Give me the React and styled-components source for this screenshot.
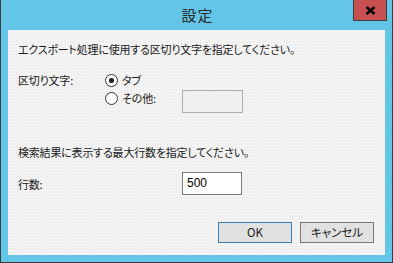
import React, { useState } from 'react';
import styled, { createGlobalStyle } from 'styled-components';

const GlobalStyle = createGlobalStyle`
  html, body {
    margin: 0;
    padding: 0;
    background: #ffffff;
  }
  body {
    font-family: "Noto Sans CJK JP", "Noto Sans", sans-serif;
  }
`;

const Window = styled.div`
  width: 393px;
  height: 263px;
  box-sizing: border-box;
  background: #63c6e8;
  border-left: 1px solid #3b3b3b;
  border-right: 1px solid #3b3b3b;
  border-bottom: 1px solid #3b3b3b;
  display: flex;
  flex-direction: column;
  padding: 0 7px 7px 7px;
`;

const TitleBar = styled.div`
  height: 30px;
  position: relative;
  display: flex;
  align-items: center;
  justify-content: center;
`;

const Title = styled.div`
  font-family: "Noto Sans CJK JP", sans-serif;
  font-size: 15px;
  color: #2b2b2b;
  letter-spacing: 1px;
  margin-top: -1px;
  padding-left: 2px;
`;

const CloseButton = styled.div`
  position: absolute;
  top: 0;
  right: -2px;
  width: 34px;
  height: 21px;
  box-sizing: border-box;
  background: #c75050;
  border: 1px solid #3d3d3d;
  border-top: none;
  display: flex;
  align-items: center;
  justify-content: center;
`;

const Client = styled.div`
  flex: 1;
  box-sizing: border-box;
  background-color: #f0f0f0;
  background-image: radial-gradient(circle, rgba(255, 255, 255, 0.85) 0.6px, transparent 0.9px);
  background-size: 3px 3px;
  padding: 10px 11px 0 10px;
  display: flex;
  flex-direction: column;
  font-size: 11px;
  letter-spacing: -0.2px;
  color: #1a1a1a;
  font-feature-settings: "palt";
`;

const Text = styled.div`
  line-height: 18px;
  height: 18px;
  white-space: nowrap;
  margin-top: ${p => p.$top || 0}px;
`;

const Grid = styled.div`
  display: grid;
  grid-template-columns: 87px 1fr;
  margin-top: ${p => p.$top || 0}px;
`;

const Label = styled.div`
  line-height: 18px;
  height: 18px;
  white-space: nowrap;
`;

const Options = styled.div`
  display: flex;
  flex-direction: column;
`;

const OptionRow = styled.div`
  display: flex;
  align-items: flex-start;
`;

const Option = styled.label`
  display: flex;
  align-items: center;
  height: 18px;
  width: ${p => p.$width || 'auto'};
  gap: 4px;
  cursor: default;
`;

const Radio = styled.span`
  width: 13px;
  height: 13px;
  box-sizing: border-box;
  border-radius: 50%;
  border: 1px solid #333333;
  background: #ffffff;
  display: flex;
  align-items: center;
  justify-content: center;
  &::after {
    content: '';
    width: 5px;
    height: 5px;
    border-radius: 50%;
    background: ${p => (p.$checked ? '#1a1a1a' : 'transparent')};
  }
`;

const Field = styled.div`
  width: ${p => p.$width}px;
  height: ${p => p.$height}px;
  box-sizing: border-box;
  margin-top: ${p => p.$top || 0}px;
  border: 1px solid ${p => (p.$disabled ? '#adadad' : '#7a7a7a')};
  background: ${p => (p.$disabled ? '#f0f0f0' : '#ffffff')};
  font-family: "Liberation Sans", Arial, sans-serif;
  font-size: 12px;
  letter-spacing: 0;
  line-height: ${p => p.$height - 2}px;
  padding-left: 4px;
  color: #000;
`;

const CountRow = styled.div`
  display: flex;
  align-items: center;
  margin-top: ${p => p.$top || 0}px;
`;

const CountLabel = styled.div`
  width: 164px;
  line-height: 18px;
  padding-top: 1px;
`;

const ButtonRow = styled.div`
  display: flex;
  justify-content: flex-end;
  gap: 8px;
  margin-top: 27px;
`;

const Button = styled.button`
  width: 74px;
  height: 21px;
  box-sizing: border-box;
  background: #e1e1e1;
  border: 1px solid ${p => (p.$primary ? '#3c7fb1' : '#7a7a7a')};
  font-family: "Noto Sans CJK JP", sans-serif;
  font-feature-settings: "palt";
  font-size: 11.5px;
  color: #1a1a1a;
  padding: 0;
  line-height: 19px;
`;

const CloseIcon = () => (
  <svg width="11" height="9" viewBox="0 0 11 9">
    <path d="M1.5 1 L9.5 8 M9.5 1 L1.5 8" stroke="#000" strokeWidth="2.4" />
  </svg>
);

const App = () => {
  const [delimiter, setDelimiter] = useState('tab');

  return (
    <>
      <GlobalStyle />
      <Window>
        <TitleBar>
          <Title>設定</Title>
          <CloseButton>
            <CloseIcon />
          </CloseButton>
        </TitleBar>
        <Client>
          <Text>エクスポート処理に使用する区切り文字を指定してください。</Text>
          <Grid $top={13}>
            <Label>区切り文字:</Label>
            <Options>
              <Option onClick={() => setDelimiter('tab')}>
                <Radio $checked={delimiter === 'tab'} />
                タブ
              </Option>
              <OptionRow>
                <Option $width="77px" onClick={() => setDelimiter('other')}>
                  <Radio $checked={delimiter === 'other'} />
                  その他:
                </Option>
                <Field $width={61} $height={23} $top={1} $disabled={delimiter !== 'other'} />
              </OptionRow>
            </Options>
          </Grid>
          <Text $top={30}>検索結果に表示する最大行数を指定してください。</Text>
          <CountRow $top={11}>
            <CountLabel>行数:</CountLabel>
            <Field $width={60} $height={23}>500</Field>
          </CountRow>
          <ButtonRow>
            <Button $primary>OK</Button>
            <Button>キャンセル</Button>
          </ButtonRow>
        </Client>
      </Window>
    </>
  );
};

export default App;
